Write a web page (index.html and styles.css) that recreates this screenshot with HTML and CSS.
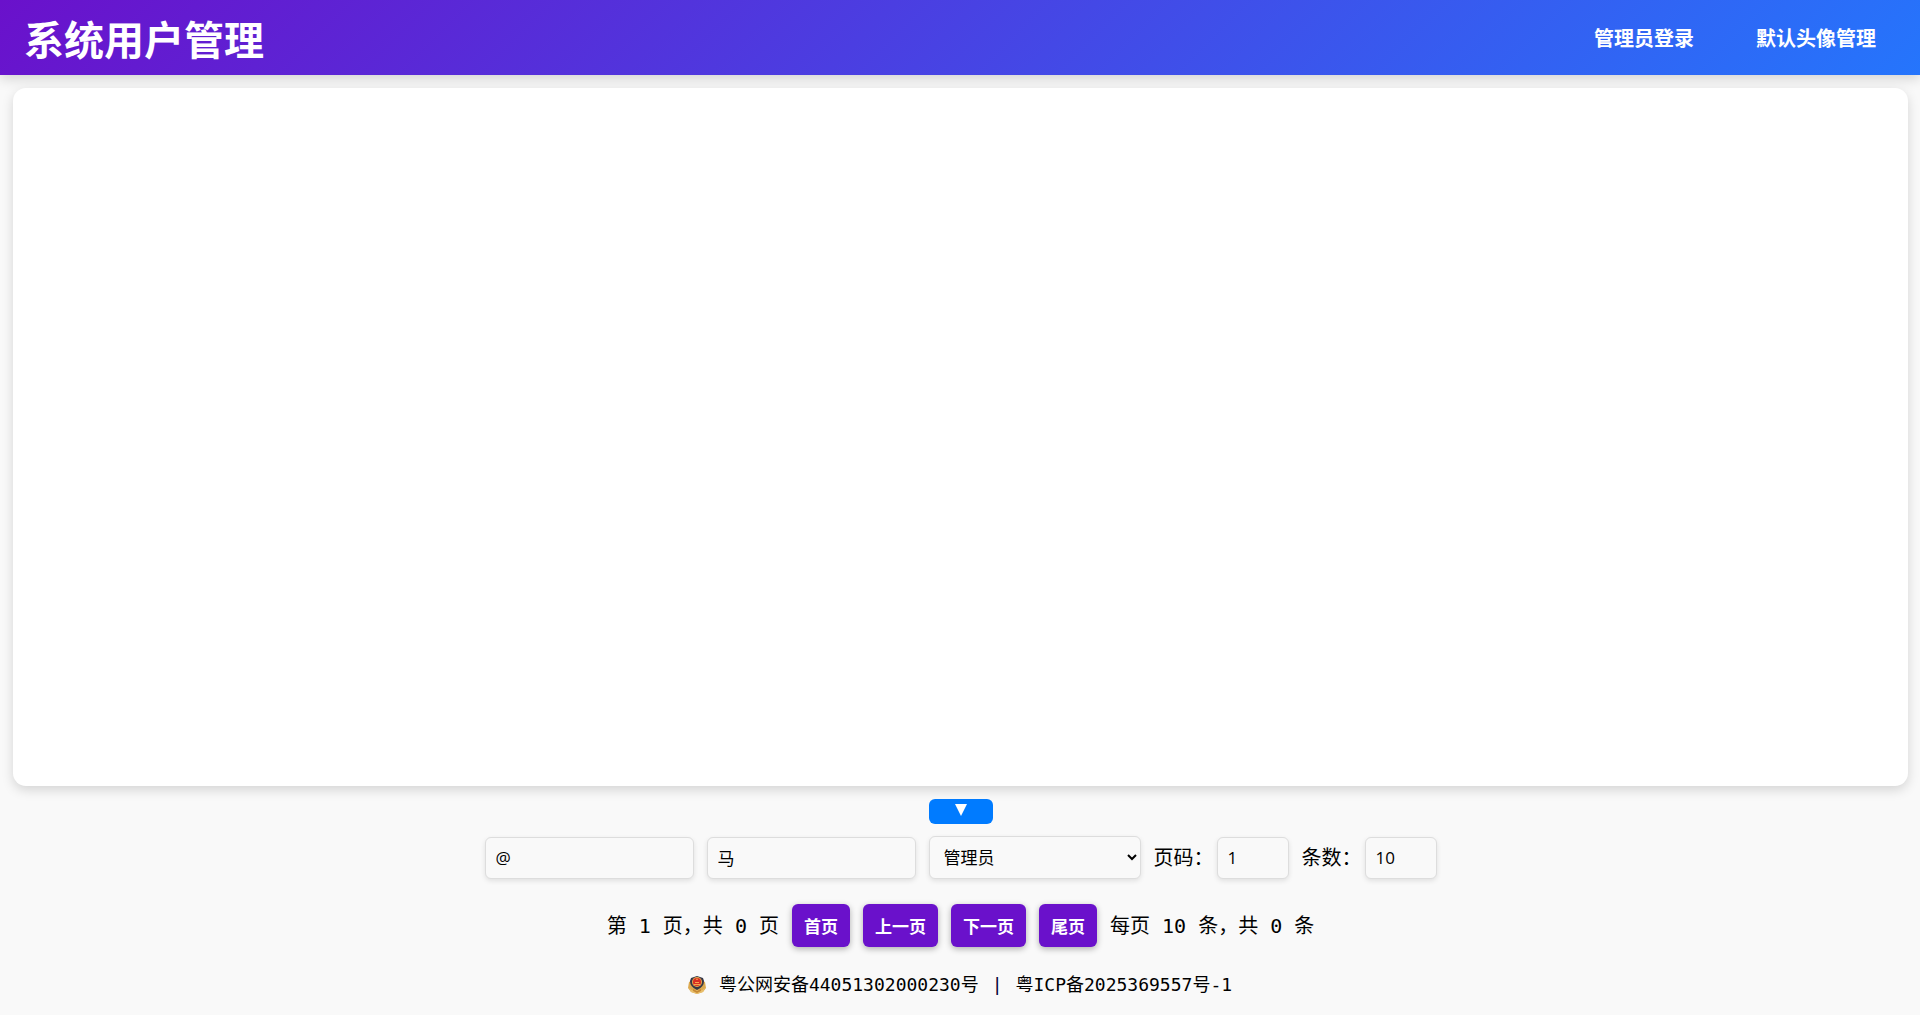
FILE: index.html
```html
<!DOCTYPE html>
<html lang="zh-CN">
<head>
<meta charset="utf-8">
<meta name="viewport" content="width=device-width, initial-scale=1">
<title>系统用户管理</title>
<link rel="stylesheet" href="styles.css">
</head>
<body>
<header class="header">
  <h1 class="title">系统用户管理</h1>
  <nav class="nav">
    <a class="nav-link" href="#login">管理员登录</a>
    <a class="nav-link" href="#avatars">默认头像管理</a>
  </nav>
</header>
<main class="main">
  <section class="card" aria-label="用户列表"></section>
  <button class="toggle" type="button" aria-label="收起筛选"><svg width="12" height="12" viewBox="0 0 12 12" aria-hidden="true"><path d="M0 0H12L6 12Z" fill="#fff"/></svg></button>
  <form class="filters">
    <input class="field" type="text" value="@" aria-label="邮箱">
    <input class="field" type="text" value="马" aria-label="用户名">
    <select class="field select" aria-label="用户类型"><option>管理员</option></select>
    <div class="pair">
      <label for="page">页码：</label>
      <input class="field number" id="page" type="text" inputmode="numeric" value="1">
    </div>
    <div class="pair">
      <label for="size">条数：</label>
      <input class="field number" id="size" type="text" inputmode="numeric" value="10">
    </div>
  </form>
  <div class="pager">
    <span>第 1 页，共 0 页</span>
    <button class="page-button" type="button">首页</button>
    <button class="page-button" type="button">上一页</button>
    <button class="page-button" type="button">下一页</button>
    <button class="page-button" type="button">尾页</button>
    <span>每页 10 条，共 0 条</span>
  </div>
</main>
<footer class="footer">
  <svg width="18" height="18" viewBox="0 0 18 18" aria-hidden="true">
    <path d="M1 6L3 5L5 10H13L15 5L17 6L18 12L15 16L9 18L3 16L0 12Z" fill="#dca94f"/>
    <path d="M1 12Q4 16 9 14Q14 16 17 12L15 16L9 18L3 16Z" fill="#e9c06d"/>
    <path d="M9 0L12 1L15 2L16 5Q16 11 9 14Q2 11 2 5L3 2L6 1Z" fill="#353747"/>
    <circle cx="9" cy="6" r="5" fill="#e8a84c"/>
    <circle cx="9" cy="6" r="4" fill="#d92c24"/>
    <path d="M9 2L10 4H8ZM6 8H12V9H6ZM7 6H11V7H7Z" fill="#f5a54a"/>
    <path d="M5 13L9 15L13 13V15L9 17L5 15Z" fill="#c78a35"/>
  </svg>
  <a href="#police">粤公网安备44051302000230号</a>
  <span class="divider">|</span>
  <a href="#icp">粤ICP备2025369557号-1</a>
</footer>
</body>
</html>
```
FILE: styles.css
```css
* {
  box-sizing: border-box;
}

body {
  display: flex;
  flex-direction: column;
  min-height: 100vh;
  margin: 0;
  background: #f9f9f9;
  color: #000;
  font-family: "DejaVu Sans Mono", "Noto Sans CJK SC", monospace;
  font-size: 20px;
  line-height: 24px;
}

a {
  color: inherit;
  text-decoration: none;
}

.header {
  display: flex;
  align-items: center;
  justify-content: space-between;
  padding: 13px 44px 12px 24px;
  background: linear-gradient(135deg, #6a11cb, #2575fc);
  box-shadow: 0 4px 12px rgba(0, 0, 0, 0.15);
  color: #fff;
  font-family: "Noto Sans CJK SC", sans-serif;
  font-weight: 700;
}

.title {
  margin: 0;
  font-size: 40px;
  line-height: 50px;
}

.nav {
  display: flex;
  gap: 62px;
}

.main {
  display: flex;
  flex: 1;
  flex-direction: column;
  align-items: center;
  padding: 13px 12px 0 13px;
}

.card {
  flex: 1;
  align-self: stretch;
  border-radius: 13px;
  background: #fff;
  box-shadow: 0 4px 12px rgba(0, 0, 0, 0.15);
}

.toggle {
  display: flex;
  justify-content: center;
  width: 64px;
  height: 25px;
  margin: 13px 0 12px;
  padding: 5px 0 0;
  border: 0;
  border-radius: 6px;
  background: #007bff;
}

.filters,
.pager {
  display: flex;
  flex-wrap: wrap;
  align-items: center;
  justify-content: center;
  gap: 13px;
}

.field {
  width: 209px;
  height: 42px;
  padding: 0 10px;
  border: 1px solid #ddd;
  border-radius: 6px;
  background: #f9f9f9;
  box-shadow: 0 2px 5px rgba(0, 0, 0, 0.1);
  color: #000;
  font-family: "Open Sans", "Noto Sans CJK SC", sans-serif;
  font-size: 17px;
}

.select {
  width: 212px;
  height: 43px;
}

.number {
  width: 72px;
}

.pair {
  display: flex;
  align-items: center;
  gap: 3px;
}

.pager {
  padding-top: 25px;
}

.page-button {
  height: 43px;
  padding: 0 12px;
  border: 0;
  border-radius: 6px;
  background: #6a11cb;
  box-shadow: 0 2px 6px rgba(0, 0, 0, 0.3);
  color: #fff;
  font-family: "Noto Sans CJK SC", sans-serif;
  font-size: 17px;
  font-weight: 700;
}

.footer {
  display: flex;
  align-items: center;
  justify-content: center;
  gap: 13px;
  padding: 26px 0 18px;
  font-size: 18px;
}

.divider {
  color: #000033;
}
```
